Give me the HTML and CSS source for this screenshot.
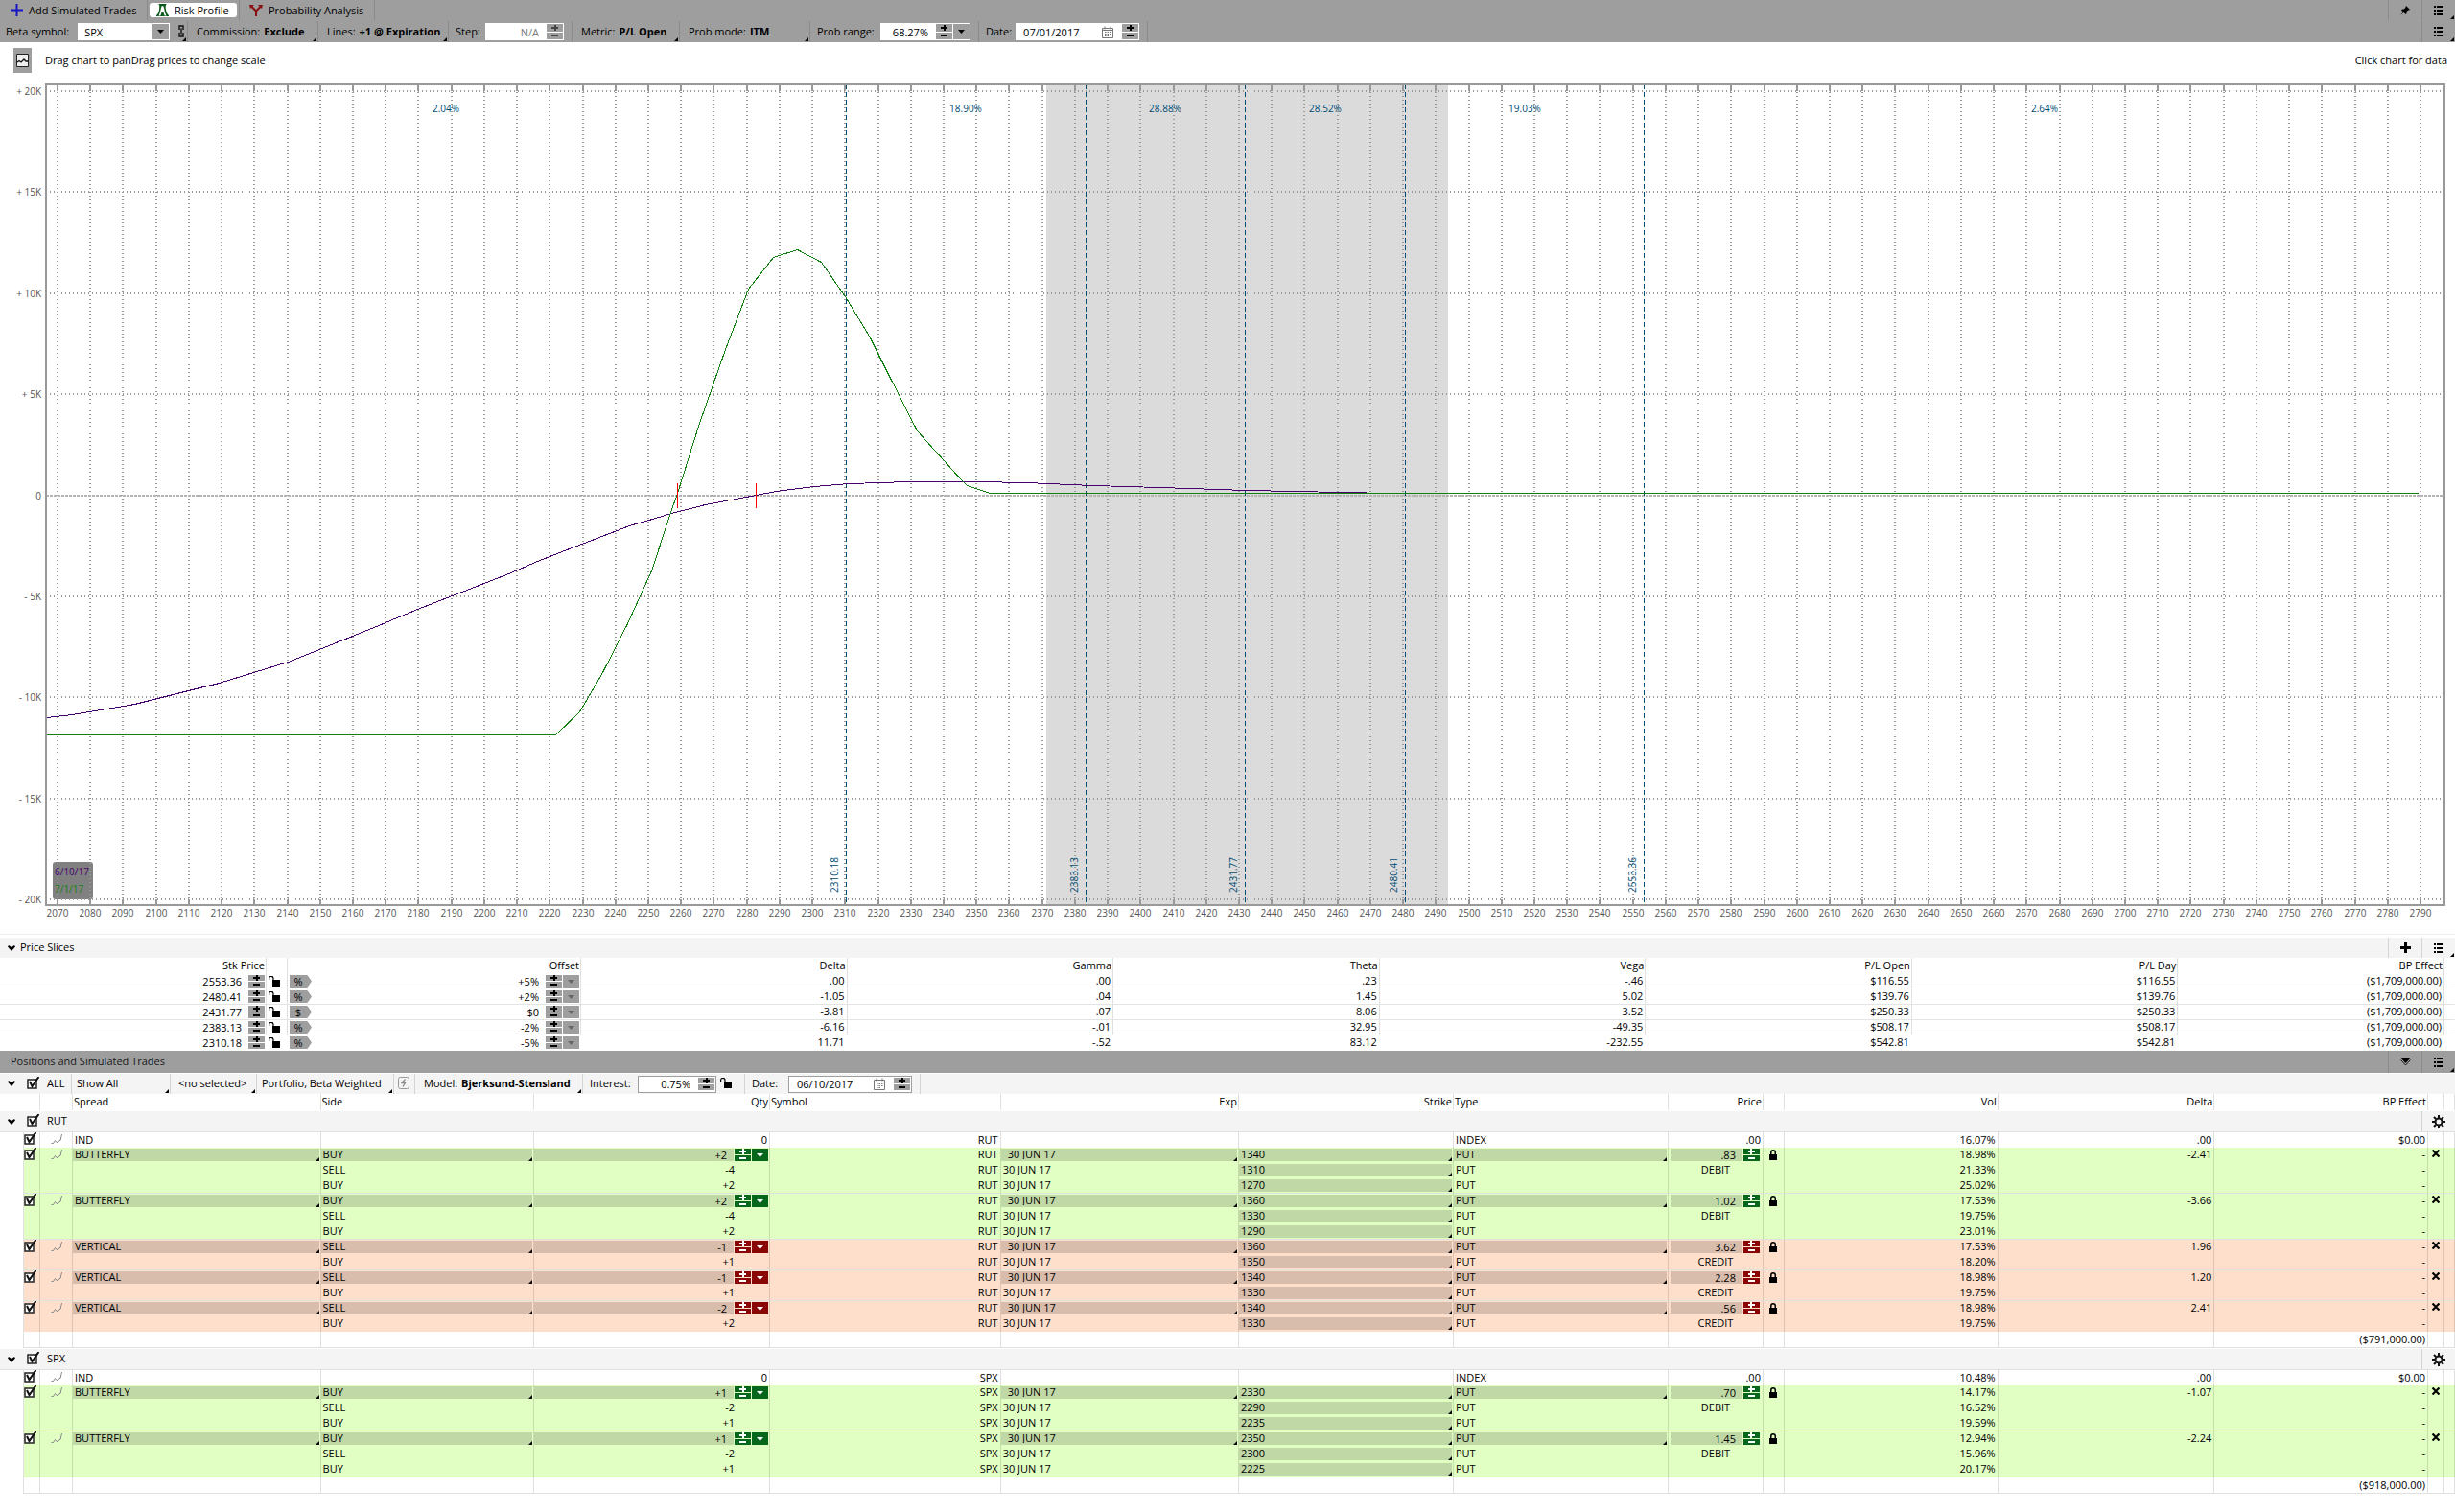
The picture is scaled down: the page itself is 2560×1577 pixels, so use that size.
FILE: index.html
```html
<!DOCTYPE html>
<html lang="en">
<head>
    <meta charset="UTF-8">
    <meta name="viewport" content="width=device-width, initial-scale=1.0">
    <title>Risk Profile</title>
    <link rel="stylesheet" href="styles.css">
</head>
<body>
    <svg class="sprite" aria-hidden="true">
        <symbol id="i-list" viewBox="0 0 10 10"><path d="M0 0h2v2H0zM0 4h2v2H0zM0 8h2v2H0zM3 0h7v2H3zM3 4h7v2H3zM3 8h7v2H3z"/></symbol>
        <symbol id="i-pin" viewBox="0 0 10 10"><path d="M6 0l4 4-1 .6-.8-.2L6.400 6.200 6.600 8 5.600 9 3.500 6.900 0 10 3 6.400 1 4.400 2 3.400l1.800.2L5.600 1.800 5.400 1z"/></symbol>
        <symbol id="i-caret" viewBox="0 0 8 6"><path d="M1 0l3 2 3-2 1 1.500L4 6 0 1.500z"/></symbol>
        <symbol id="i-down" viewBox="0 0 7 4"><path d="M0 0h7L3.500 4z"/></symbol>
        <symbol id="i-check" viewBox="0 0 13 13"><path d="M1 3h9v9H1z" fill="#fff" stroke="#222" stroke-width="1.500"/><path d="M3 5l2.500 5L12.500 0" fill="none" stroke="#111" stroke-width="2"/></symbol>
        <symbol id="i-lock" viewBox="0 0 8 11"><path d="M0 5h1V3a3 3 0 0 1 6 0v2h1v6H0zM2.500 5h3V3a1.500 1.500 0 0 0-3 0z"/></symbol>
        <symbol id="i-unlock" viewBox="0 0 12 11"><path d="M4 4h8v7H4z"/><path d="M.6 4V2.500a2 2 0 0 1 4.400 0V5" fill="none" stroke="#000" stroke-width="1.200"/></symbol>
        <symbol id="i-spark" viewBox="0 0 12 12"><path d="M.5 9.500h2L4.500 6.500 6 8.500h1.500L9 6.500h1L11.500 0" fill="none" stroke="#888"/></symbol>
        <symbol id="i-x" viewBox="0 0 8 8"><path d="M.5.500l7 7M7.500.500l-7 7" fill="none" stroke="#000" stroke-width="2.200"/></symbol>
        <symbol id="i-gear" viewBox="0 0 14 14"><circle cx="7" cy="7" r="3.500" fill="none" stroke="#111" stroke-width="2"/><path d="M7 0v3M7 11v3M0 7h3M11 7h3M2 2l2 2M10 10l2 2M12 2l-2 2M4 10l-2 2" stroke="#111" stroke-width="2"/></symbol>
        <symbol id="i-cal" viewBox="0 0 12 13"><path d="M.5 2.500h11v10H.5zM.5 4.500h11M3 .5v3M9 .5v3" fill="none" stroke="#777"/><path d="M3 6.500h1.500M5.500 6.500H7M8 6.500h1.500M3 8.500h1.500M5.500 8.500H7M8 8.500h1.500M3 10.500h1.500M5.500 10.500H7" stroke="#777"/></symbol>
        <symbol id="i-plus" viewBox="0 0 13 13"><path d="M6.500 0v13M0 6.500h13" stroke="#1515c8" stroke-width="2"/></symbol>
        <symbol id="i-add" viewBox="0 0 11 11"><path d="M5.500 0v11M0 5.500h11" stroke="#000" stroke-width="3"/></symbol>
        <symbol id="i-profile" viewBox="0 0 13 13"><path d="M0 0h13v13H0z" fill="#0a5a1c"/><path d="M0 0h1.500c2 0 2 3 1.500 6-.5 3-1.500 5-3 6zM13 0h-1.500c-2 0-2 3-1.500 6 .5 3 1.500 5 3 6zM6.500 2C4.500 2 5 8 2.500 12.500h1.700c.8-1.500 1-3 1.300-3.500h2c.3.5.5 2 1.300 3.500h1.700C8 8 8.500 2 6.500 2z" fill="#fff"/></symbol>
        <symbol id="i-fork" viewBox="0 0 14 13"><path d="M7 13V7.500L2.500 3M7 7.500L11.500 3" fill="none" stroke="#8a1010" stroke-width="2"/><path d="M0 1h5L1 5zM14 1H9l4 4z" fill="#8a1010"/></symbol>
        <symbol id="i-link" viewBox="0 0 6 13"><path d="M1 5V1h4v4M1 8v4h4V8M3 3.500v6" fill="none" stroke="#111" stroke-width="1.400"/></symbol>
        <symbol id="i-chart" viewBox="0 0 19 26"><path d="M0 0h19v26H0z" fill="#9e9e9e"/><path d="M3.500 6.500h12v13h-12z" fill="#eee" stroke="#222"/><path d="M4 15l2-1.500 2 1.500 3-3 2 2h2" fill="none" stroke="#111" stroke-width="1.300"/></symbol>
        <symbol id="i-bolt" viewBox="0 0 12 13"><rect x=".5" y=".5" width="11" height="12" rx="2" fill="none" stroke="#999"/><path d="M7.500 2.500L4 6.500h3.500L5 10.500" fill="none" stroke="#888" stroke-width="1.300"/></symbol>
        <symbol id="i-collapse" viewBox="0 0 11 9"><path d="M0 0h11L5.500 6z"/><path d="M.5 2.500l5 5.500 5-5.500" fill="none" stroke="#222"/></symbol>
    </svg>

    <nav class="bar tabs">
        <button class="tab tab-add"><svg width="13" height="13"><use href="#i-plus"/></svg>Add Simulated Trades</button>
        <button class="tab tab-active"><span><svg width="13" height="13"><use href="#i-profile"/></svg>Risk Profile</span></button>
        <button class="tab tab-prob"><svg width="14" height="13"><use href="#i-fork"/></svg>Probability Analysis</button>
        <div class="bar-right">
            <button class="icon-btn" aria-label="Pin"><svg width="10" height="10"><use href="#i-pin"/></svg></button>
            <button class="icon-btn corner" aria-label="Menu"><svg width="10" height="10"><use href="#i-list"/></svg></button>
        </div>
    </nav>

    <div class="bar tools">
        <div class="tool w-beta corner">
            <label for="beta">Beta symbol:</label>
            <div class="box box-select">
                <select id="beta"><option>SPX</option></select>
                <span class="drop"><svg width="7" height="4"><use href="#i-down"/></svg></span>
            </div>
            <svg width="6" height="13"><use href="#i-link"/></svg>
        </div>
        <button class="tool w-136 corner">Commission: <b>Exclude</b></button>
        <button class="tool w-136 corner">Lines: <b>+1 @ Expiration</b></button>
        <div class="tool w-step">
            <label for="step">Step:</label>
            <div class="box box-step disabled">
                <input id="step" type="text" value="N/A" disabled>
                <span class="stepper big"><button class="up" aria-label="Increase"></button><button class="down" aria-label="Decrease"></button></span>
            </div>
        </div>
        <button class="tool w-112 corner">Metric: <b>P/L Open</b></button>
        <button class="tool w-136 corner">Prob mode: <b>ITM</b></button>
        <div class="tool w-range">
            <label for="range">Prob range:</label>
            <div class="box box-range">
                <input id="range" type="text" value="68.27%">
                <span class="stepper big"><button class="up" aria-label="Increase"></button><button class="down" aria-label="Decrease"></button></span>
                <button class="drop" aria-label="Choose"><svg width="7" height="4"><use href="#i-down"/></svg></button>
            </div>
        </div>
        <div class="tool w-range">
            <label for="date1">Date:</label>
            <div class="box box-date">
                <input id="date1" type="text" value="07/01/2017">
                <svg width="12" height="13"><use href="#i-cal"/></svg>
                <span class="stepper big"><button class="up" aria-label="Next day"></button><button class="down" aria-label="Previous day"></button></span>
            </div>
        </div>
        <div class="bar-right">
            <button class="icon-btn corner" aria-label="Menu"><svg width="10" height="10"><use href="#i-list"/></svg></button>
        </div>
    </div>

    <section class="chart">
        <div class="chart-head">
            <button class="chart-btn" aria-label="Chart"><svg width="19" height="26"><use href="#i-chart"/></svg></button>
            <p>Drag chart to panDrag prices to change scale</p>
            <p class="hint">Click chart for data</p>
        </div>
        <div class="plot" id="plot"></div>
    </section>

    <section class="slices">
        <div class="panel-head">
            <svg width="8" height="6"><use href="#i-caret"/></svg>
            <h2>Price Slices</h2>
            <div class="bar-right">
                <button class="icon-btn" aria-label="Add slice"><svg width="11" height="11"><use href="#i-add"/></svg></button>
                <button class="icon-btn corner" aria-label="Menu"><svg width="10" height="10"><use href="#i-list"/></svg></button>
            </div>
        </div>
        <table class="slice-table">
            <colgroup>
                <col class="c-price"><col class="c-lock"><col class="c-offset">
                <col><col><col><col><col><col><col>
                <col class="c-end">
            </colgroup>
            <thead>
                <tr><th>Stk Price</th><th></th><th>Offset</th><th>Delta</th><th>Gamma</th><th>Theta</th><th>Vega</th><th>P/L Open</th><th>P/L Day</th><th>BP Effect</th><th></th></tr>
            </thead>
            <tbody id="sliceRows"></tbody>
        </table>
    </section>

    <section class="positions">
        <div class="bar title-bar">
            <h2>Positions and Simulated Trades</h2>
            <div class="bar-right">
                <button class="icon-btn" aria-label="Collapse"><svg width="11" height="9"><use href="#i-collapse"/></svg></button>
                <button class="icon-btn corner" aria-label="Menu"><svg width="10" height="10"><use href="#i-list"/></svg></button>
            </div>
        </div>
        <div class="filters">
            <div class="tool w-all">
                <svg width="8" height="6"><use href="#i-caret"/></svg>
                <label class="check"><input type="checkbox" checked><svg width="13" height="13"><use href="#i-check"/></svg><span>ALL</span></label>
            </div>
            <button class="tool w-show corner">Show All</button>
            <button class="tool w-sel corner">&lt;no selected&gt;</button>
            <button class="tool w-port corner">Portfolio, Beta Weighted</button>
            <button class="tool w-bolt" aria-label="Quick filter"><svg width="12" height="13"><use href="#i-bolt"/></svg></button>
            <button class="tool w-model corner">Model: <b>Bjerksund-Stensland</b></button>
            <div class="tool w-interest">
                <label for="interest">Interest:</label>
                <div class="box box-step">
                    <input id="interest" type="text" value="0.75%">
                    <span class="stepper"><button class="up" aria-label="Increase"></button><button class="down" aria-label="Decrease"></button></span>
                </div>
                <svg width="12" height="11"><use href="#i-unlock"/></svg>
            </div>
            <div class="tool w-date">
                <label for="date2">Date:</label>
                <div class="box box-date">
                    <input id="date2" type="text" value="06/10/2017">
                    <svg width="12" height="13"><use href="#i-cal"/></svg>
                    <span class="stepper"><button class="up" aria-label="Next day"></button><button class="down" aria-label="Previous day"></button></span>
                </div>
            </div>
        </div>
        <table class="trade-table">
            <colgroup>
                <col class="t-tree"><col class="t-check"><col class="t-icon"><col class="t-spread"><col class="t-side"><col class="t-qty">
                <col class="t-symbol"><col class="t-exp"><col class="t-strike"><col class="t-type"><col class="t-price"><col class="t-lock">
                <col class="t-vol"><col><col class="t-bp"><col class="t-x"><col class="t-end">
            </colgroup>
            <thead>
                <tr><th class="bare"></th><th></th><th></th><th class="left">Spread</th><th class="left">Side</th><th>Qty</th><th class="left">Symbol</th><th>Exp</th><th>Strike</th><th class="left">Type</th><th>Price</th><th></th><th>Vol</th><th>Delta</th><th>BP Effect</th><th></th><th></th></tr>
            </thead>
            <tbody id="tradeRows"></tbody>
        </table>
    </section>

    <script src="app.js"></script>
</body>
</html>
```

FILE: styles.css
```css
* {
    box-sizing: border-box;
}

body {
    margin: 0;
    min-height: 100vh;
    display: flex;
    flex-direction: column;
    background: #fff;
    color: #000;
    font-family: "Open Sans", "Noto Sans", sans-serif;
    font-size: 11px;
    line-height: 15px;
}

h2, p {
    margin: 0;
    font-size: 11px;
    font-weight: normal;
}

button, input, select {
    margin: 0;
    padding: 0;
    border: 0;
    border-radius: 0;
    background: none;
    color: inherit;
    font: inherit;
}

select {
    appearance: none;
}

svg {
    display: block;
    flex: none;
}

.sprite {
    position: absolute;
    width: 0;
    height: 0;
}

/* Bars */
.bar {
    display: flex;
    background: #9e9e9e;
}

.bar-right {
    display: flex;
    align-self: stretch;
    margin-left: auto;
}

.icon-btn {
    width: 35px;
    display: flex;
    align-items: center;
    justify-content: center;
    border-left: 1px solid #8a8a8a;
}

.corner {
    position: relative;
}

.corner::after {
    content: "";
    position: absolute;
    right: 1px;
    bottom: 1px;
    border-left: 4px solid transparent;
    border-bottom: 4px solid #000;
}

.tabs {
    height: 22px;
    padding-bottom: 1px;
}

.tab {
    display: flex;
    align-items: center;
    gap: 6px;
    padding-bottom: 1px;
    border-right: 1px solid #8a8a8a;
    white-space: nowrap;
}

.tab-add {
    width: 154px;
    padding-left: 11px;
}

.tab-active {
    width: 96px;
    padding: 0 2px 1px;
}

.tab-active span {
    flex: 1;
    height: 15px;
    display: flex;
    align-items: center;
    gap: 6px;
    padding-left: 7px;
    border-radius: 3px;
    background: #fff;
}

.tab-prob {
    width: 141px;
    padding-left: 10px;
}

.tools {
    height: 22px;
}

.tool {
    display: flex;
    align-items: center;
    gap: 4px;
    padding-left: 9px;
    padding-bottom: 2px;
    border-right: 1px solid #8a8a8a;
    white-space: nowrap;
}

.w-beta { width: 196px; padding-left: 6px; gap: 9px; }
.w-112 { width: 112px; }
.w-136 { width: 136px; }
.w-step { width: 129px; padding-left: 7px; padding-right: 8px; }
.w-range { width: 176px; padding-left: 7px; padding-right: 8px; }
.w-all { width: 75px; padding-left: 8px; gap: 12px; }
.w-show { width: 103px; padding-left: 5px; }
.w-sel { width: 90px; padding-left: 8px; }
.w-port { width: 143px; padding-left: 5px; }
.w-bolt { width: 22px; padding-left: 4px; }
.w-model { width: 175px; }
.w-interest { width: 169px; padding-left: 7px; padding-right: 13px; }
.w-date { width: 183px; padding-left: 7px; padding-right: 8px; }

.box {
    height: 18px;
    display: flex;
    align-items: center;
    gap: 1px;
    margin-top: 2px;
    margin-left: auto;
    padding: 1px;
    background: #fff;
}

.box input {
    flex: 1;
    min-width: 0;
    padding-right: 7px;
    text-align: right;
}

.box-select { width: 96px; margin-left: 0; }
.box-select select { flex: 1; padding-left: 6px; }
.box-step { width: 82px; }
.box-range { width: 94px; }
.box-date { width: 129px; }
.box-date input { padding-left: 7px; text-align: left; }
.box-date svg { margin-right: 8px; }

.drop {
    width: 17px;
    align-self: stretch;
    display: flex;
    align-items: center;
    justify-content: center;
    background: #9e9e9e;
}

.disabled input {
    color: #777;
}

.disabled .stepper {
    --mark: #444;
}

/* Plus and minus buttons */
.stepper {
    --face: #9e9e9e;
    --mark: #000;
    width: 17px;
    height: 13px;
    flex: none;
    display: flex;
    flex-direction: column;
    gap: 1px;
}

.stepper.big {
    height: 16px;
}

.stepper button {
    flex: 1;
    background: linear-gradient(var(--mark), var(--mark)) center / 7px 2px no-repeat var(--face);
}

.stepper .up {
    background: linear-gradient(var(--mark), var(--mark)) center / 7px 2px no-repeat, linear-gradient(var(--mark), var(--mark)) center / 2px 6px no-repeat var(--face);
}

/* Chart */
.chart {
    flex: 1;
    display: flex;
    flex-direction: column;
    margin-bottom: 3px;
    padding-bottom: 2px;
    border-bottom: 1px solid #f0f0f0;
}

.chart-head {
    height: 43px;
    display: flex;
    align-items: center;
    gap: 14px;
    padding: 0 8px 6px 14px;
}

.hint {
    margin-left: auto;
}

.plot {
    flex: 1;
    min-height: 400px;
    position: relative;
}

.plot svg {
    position: absolute;
    inset: 0;
}

.plot text {
    font-size: 10px;
    fill: #555;
}

.frame {
    fill: none;
    stroke: #999;
    stroke-width: 2;
}

.frame, .grid, .zero, .tick, .slice, .even, .curve {
    shape-rendering: crispEdges;
}

.range { fill: #dbdbdb; }
.grid { stroke: #999; stroke-width: 2; stroke-dasharray: 1 3; }
.zero { stroke: #b4b4b4; stroke-width: 2; stroke-dasharray: 3 1; }
.tick { stroke: #999; stroke-width: 2; }
.slice { stroke: #004b73; stroke-dasharray: 5 3; }
.even { stroke: #f00; }
.legend { fill: #808080; }

.curve {
    fill: none;
    stroke-width: 1;
}

.now { stroke: #46006e; }
.exp { stroke: #118011; }

.plot .prob, .plot .slice-label {
    fill: #004b73;
}

.plot .legend-now { fill: #46006e; }
.plot .legend-exp { fill: #118011; }

/* Tables */
table {
    width: 100%;
    table-layout: fixed;
    border-collapse: separate;
    border-spacing: 0;
}

th, td {
    height: 16px;
    padding: 0 2px;
    border-right: 1px solid rgba(0, 0, 0, 0.12);
    font-weight: normal;
    line-height: 13px;
    text-align: right;
    vertical-align: top;
    white-space: nowrap;
}

th {
    height: 17px;
    padding: 0 1px;
    line-height: 15px;
}

.left {
    text-align: left;
}

.center {
    text-align: center;
}

.panel-head {
    height: 21px;
    display: flex;
    align-items: center;
    gap: 5px;
    padding-left: 8px;
    background: #f4f4f4;
}

.panel-head h2, .title-bar h2 {
    padding-bottom: 2px;
}

.panel-head .icon-btn {
    border-color: #d4d4d4;
}

.c-price { width: 278px; }
.c-lock { width: 22px; }
.c-offset { width: 306px; }
.c-end { width: 11px; }

.slice-table td {
    border-bottom: 1px solid #e4e4e4;
}

.slice-table tr:last-child td, .slice-table td:last-child, .slice-table th:last-child {
    border-right-color: transparent;
}

.slice-table tr:last-child td {
    border-bottom: 0;
}

.cell {
    height: 13px;
    display: flex;
    align-items: center;
    gap: 1px;
    margin-top: 1px;
}

.cell input {
    flex: 1;
    min-width: 0;
    height: 13px;
    padding-right: 7px;
    text-align: right;
}

.slice-table .cell {
    margin-right: -1px;
}

.slice-table .cell input {
    padding-right: 6px;
}

.cell .drop {
    color: #666;
    fill: #666;
}

.unit {
    width: 23px;
    height: 13px;
    padding-right: 5px;
    background: #9e9e9e;
    clip-path: polygon(0 0, 80% 0, 100% 50%, 80% 100%, 0 100%);
    line-height: 13px;
}

.mark {
    display: block;
    margin: 2px auto 0;
}

.slice-table .mark {
    margin-left: 0;
}

/* Positions */
.positions {
    padding-bottom: 19px;
}

.title-bar {
    height: 23px;
    align-items: center;
    padding-left: 11px;
    color: #1a1a1a;
}

.filters {
    height: 21px;
    display: flex;
    margin-top: 1px;
    background: #f4f4f4;
}

.filters .tool {
    border-color: #d4d4d4;
}

.filters .box {
    border: 1px solid #9e9e9e;
}

.check {
    display: flex;
    align-items: center;
    gap: 8px;
}

.check input {
    position: absolute;
    opacity: 0;
}

.t-tree { width: 25px; }
.t-check { width: 17px; }
.t-icon { width: 34px; }
.t-spread { width: 10.1%; }
.t-side { width: 8.7%; }
.t-qty { width: 9.6%; }
.t-symbol { width: 9.4%; }
.t-exp { width: 9.7%; }
.t-strike, .t-type { width: 8.75%; }
.t-price { width: 99px; }
.t-lock { width: 22px; }
.t-vol, .t-bp { width: 8.7%; }
.t-x { width: 17px; }
.t-end { width: 11px; }

.trade-table .bare {
    border-right: 0;
}

.trade-table .tight {
    padding: 0;
}

.trade-table .group td {
    height: 23px;
    padding: 0;
    border-top: 1px solid #fff;
    border-right: 0;
    border-bottom: 1px solid #e0e0e0;
    text-align: left;
}

.group-head {
    height: 21px;
    display: flex;
    align-items: center;
    gap: 12px;
    padding-left: 8px;
    background: #f4f4f4;
}

.group-head .check {
    padding-bottom: 2px;
    line-height: 15px;
}

.group-head .icon-btn {
    border-color: #d4d4d4;
}

.index td { line-height: 15px; }
.buy td:not(:first-child) { background: #e1fec3; }
.sell td:not(:first-child) { background: #fedfcb; }
.last td:not(:first-child) { border-bottom: 1px solid #dfe3df; }
.total td { height: 17px; line-height: 15px; }
.total td:not(:first-child) { border-bottom: 1px solid #e0e0e0; }

.buy .stepper { --face: #06661c; --mark: #fff; }
.sell .stepper { --face: #8a0505; --mark: #fff; }
.buy .cell .drop { background: #06661c; fill: #fff; }
.sell .cell .drop { background: #8a0505; fill: #fff; }

.pick {
    position: relative;
    display: flex;
    height: 13px;
    margin: 1px 1px 0 0;
    background: rgba(0, 0, 0, 0.15);
}

.pick select {
    flex: 1;
    height: 13px;
    padding-left: 2px;
    padding-bottom: 2px;
    line-height: 11px;
}

.pick.corner::after {
    right: 0;
    bottom: 0;
}

.pick.indent select {
    padding-left: 7px;
}

.cell.shade {
    margin-right: 1px;
}

.shade input {
    background: rgba(0, 0, 0, 0.15);
}

.trade-table .leg-qty {
    padding-right: 36px;
}
```

FILE: app.js
```js
const icon = (name, w, h, cls = '') =>
    `<svg class="${cls}" width="${w}" height="${h}"><use href="#i-${name}"/></svg>`;

const stepper = `<span class="stepper"><button class="up" aria-label="Increase"></button><button class="down" aria-label="Decrease"></button></span>`;
const drop = `<button class="drop" aria-label="Choose">${icon('down', 7, 4)}</button>`;

const check = (label, text = '') =>
    `<label class="check"><input type="checkbox" aria-label="${label}" checked>${icon('check', 13, 13)}${text && `<span>${text}</span>`}</label>`;

const pick = (label, value, cls = '') =>
    `<div class="pick corner ${cls}"><select aria-label="${label}"><option>${value}</option></select></div>`;

// ---- Price slices ----
const slices = [
    ['2553.36', '%', '+5%', '.00', '.00', '.23', '-.46', '$116.55'],
    ['2480.41', '%', '+2%', '-1.05', '.04', '1.45', '5.02', '$139.76'],
    ['2431.77', '$', '$0', '-3.81', '.07', '8.06', '3.52', '$250.33'],
    ['2383.13', '%', '-2%', '-6.16', '-.01', '32.95', '-49.35', '$508.17'],
    ['2310.18', '%', '-5%', '11.71', '-.52', '83.12', '-232.55', '$542.81']
];

document.getElementById('sliceRows').innerHTML = slices.map(([price, unit, offset, ...rest]) => `
    <tr>
        <td><div class="cell"><input type="text" aria-label="Stk Price" value="${price}">${stepper}</div></td>
        <td>${icon('unlock', 12, 11, 'mark')}</td>
        <td><div class="cell"><button class="unit">${unit}</button><input type="text" aria-label="Offset" value="${offset}">${stepper}${drop}</div></td>
        ${rest.map(v => `<td>${v}</td>`).join('')}
        <td>${rest[4]}</td>
        <td>($1,709,000.00)</td>
        <td></td>
    </tr>`).join('');

// ---- Positions ----
// legs: [side, qty, strike, vol]
const groups = [
    {
        symbol: 'RUT', vol: '16.07%', total: '($791,000.00)',
        trades: [
            { name: 'BUTTERFLY', price: '.83', delta: '-2.41', legs: [['BUY', '+2', 1340, '18.98%'], ['SELL', '-4', 1310, '21.33%'], ['BUY', '+2', 1270, '25.02%']] },
            { name: 'BUTTERFLY', price: '1.02', delta: '-3.66', legs: [['BUY', '+2', 1360, '17.53%'], ['SELL', '-4', 1330, '19.75%'], ['BUY', '+2', 1290, '23.01%']] },
            { name: 'VERTICAL', price: '3.62', delta: '1.96', legs: [['SELL', '-1', 1360, '17.53%'], ['BUY', '+1', 1350, '18.20%']] },
            { name: 'VERTICAL', price: '2.28', delta: '1.20', legs: [['SELL', '-1', 1340, '18.98%'], ['BUY', '+1', 1330, '19.75%']] },
            { name: 'VERTICAL', price: '.56', delta: '2.41', legs: [['SELL', '-2', 1340, '18.98%'], ['BUY', '+2', 1330, '19.75%']] }
        ]
    },
    {
        symbol: 'SPX', vol: '10.48%', total: '($918,000.00)',
        trades: [
            { name: 'BUTTERFLY', price: '.70', delta: '-1.07', legs: [['BUY', '+1', 2330, '14.17%'], ['SELL', '-2', 2290, '16.52%'], ['BUY', '+1', 2235, '19.59%']] },
            { name: 'BUTTERFLY', price: '1.45', delta: '-2.24', legs: [['BUY', '+1', 2350, '12.94%'], ['SELL', '-2', 2300, '15.96%'], ['BUY', '+1', 2225, '20.17%']] }
        ]
    }
];

function legRow(symbol, trade, leg, i, lastTrade) {
    const [side, qty, strike, vol] = leg;
    const buy = trade.legs[0][0] === 'BUY';
    const first = i === 0;
    const last = i === trade.legs.length - 1 && !lastTrade;
    return `
    <tr class="${buy ? 'buy' : 'sell'} ${last ? 'last' : ''}">
        <td></td>
        <td class="tight">${first ? check(trade.name) : ''}</td>
        <td>${first ? icon('spark', 12, 12, 'mark') : ''}</td>
        <td class="left tight">${first ? pick('Spread', trade.name) : ''}</td>
        <td class="left ${first ? 'tight' : ''}">${first ? pick('Side', side) : side}</td>
        ${first
            ? `<td class="tight"><div class="cell shade"><input type="text" aria-label="Qty" value="${qty}">${stepper}${drop}</div></td>`
            : `<td class="leg-qty">${qty}</td>`}
        <td>${symbol}</td>
        <td class="left ${first ? 'tight' : ''}">${first ? pick('Exp', '30 JUN 17', 'indent') : '30 JUN 17'}</td>
        <td class="left tight">${pick('Strike', strike)}</td>
        <td class="left ${first ? 'tight' : ''}">${first ? pick('Type', 'PUT') : 'PUT'}</td>
        ${first
            ? `<td><div class="cell shade"><input type="text" aria-label="Price" value="${trade.price}">${stepper}</div></td>`
            : `<td class="center">${i === 1 ? (buy ? 'DEBIT' : 'CREDIT') : ''}</td>`}
        <td>${first ? icon('lock', 8, 11, 'mark') : ''}</td>
        <td>${vol}</td>
        <td>${first ? trade.delta : ''}</td>
        <td>-</td>
        <td>${first ? icon('x', 8, 8, 'mark') : ''}</td>
        <td></td>
    </tr>`;
}

document.getElementById('tradeRows').innerHTML = groups.map(g => `
    <tr class="group"><td colspan="17"><div class="group-head">
        ${icon('caret', 8, 6)}${check(g.symbol, g.symbol)}
        <div class="bar-right"><button class="icon-btn" aria-label="Settings">${icon('gear', 14, 14)}</button></div>
    </div></td></tr>
    <tr class="index">
        <td></td><td class="tight">${check('IND')}</td><td>${icon('spark', 12, 12, 'mark')}</td><td class="left">IND</td><td></td><td>0</td>
        <td>${g.symbol}</td><td></td><td></td><td class="left">INDEX</td><td>.00</td><td></td>
        <td>${g.vol}</td><td>.00</td><td>$0.00</td><td></td><td></td>
    </tr>
    ${g.trades.map((t, n) => t.legs.map((leg, i) => legRow(g.symbol, t, leg, i, n === g.trades.length - 1)).join('')).join('')}
    <tr class="total">${'<td></td>'.repeat(14)}<td>${g.total}</td><td></td><td></td></tr>
`).join('');

// ---- Chart ----
const MIN = 2066.5;
const MAX = 2797.3;

const expiration = [
    [2066.5, -11836], [2221.8, -11836], [2229.1, -10683], [2236.1, -8776], [2243.7, -6333], [2251, -3710], [2256.3, -973],
    [2258.9, 120], [2265.6, 3582], [2273.5, 7235], [2280.5, 10242], [2288.1, 11789], [2295.4, 12169], [2302.7, 11552],
    [2310, 9844], [2317.3, 7899], [2323.1, 6001], [2331.9, 3202], [2345.3, 783], [2347.1, 498], [2354.1, 142], [2789.2, 142]
];

const today = [
    [2066.5, -10982], [2074.4, -10840], [2093.4, -10330], [2119, -9300], [2140.1, -8230], [2150.3, -7570], [2166.9, -6480],
    [2179.5, -5600], [2195.5, -4640], [2207.2, -3870], [2216, -3270], [2228.2, -2470], [2244.3, -1490], [2256.9, -880],
    [2267.1, -450], [2282.6, 20], [2289, 210], [2300.7, 450], [2310.9, 570], [2321.1, 640], [2328.4, 710], [2350.3, 710],
    [2365.2, 620], [2385.3, 500], [2405.8, 380], [2432, 240], [2461.2, 165], [2475.8, 142]
];

const probs = ['2.04%', '18.90%', '28.88%', '28.52%', '19.03%', '2.64%'];

function drawChart() {
    const plot = document.getElementById('plot');
    const width = plot.clientWidth;
    const height = plot.clientHeight;
    const left = 48, top = 1, right = width - 11, bottom = height - 28;
    const x = p => Math.round(left + (p - MIN) / (MAX - MIN) * (right - left));
    const y = v => Math.round(top + 7 + (20000 - v) / 40000 * (bottom - top - 13));
    const line = (cls, x1, y1, x2, y2) => `<line class="${cls}" x1="${x1}" y1="${y1}" x2="${x2}" y2="${y2}"/>`;
    const path = (cls, pts) => `<polyline class="curve ${cls}" points="${pts.map(([p, v]) => `${x(p) + 0.5},${y(v) + 0.5}`).join(' ')}"/>`;

    const strikes = slices.map(s => Number(s[0])).reverse();
    let out = `<rect class="range" x="${x(2371.3)}" y="${top}" width="${x(2493.6) - x(2371.3)}" height="${bottom - top}"/>`;
    out += `<rect class="legend" x="${left + 7}" y="${bottom - 45}" width="42" height="39" rx="3"/>`;

    for (let p = 2070; p <= 2790; p += 10) {
        out += line('grid', x(p), top, x(p), bottom);
        out += line('tick', x(p), top, x(p), top + 7) + line('tick', x(p), bottom - 6, x(p), bottom);
        out += `<text x="${x(p)}" y="${bottom + 12}" text-anchor="middle">${p}</text>`;
    }

    for (let v = -20000; v <= 20000; v += 5000) {
        const label = v === 0 ? '0' : `${v > 0 ? '+' : '-'} ${Math.abs(v) / 1000}K`;
        out += line(v === 0 ? 'zero' : 'grid', left, y(v), right, y(v));
        out += `<text x="43" y="${y(v) + 4}" text-anchor="end">${label}</text>`;
    }

    strikes.forEach(p => {
        out += line('slice', x(p) + 0.5, top, x(p) + 0.5, bottom);
        out += `<text class="slice-label" transform="translate(${x(p) - 8} ${bottom - 13}) rotate(-90)">${p.toFixed(2)}</text>`;
    });

    const edges = [MIN, ...strikes, MAX];
    probs.forEach((t, i) => {
        const mid = Math.round((x(edges[i]) + x(edges[i + 1])) / 2);
        out += `<text class="prob" x="${mid}" y="${top + 29}" text-anchor="middle">${t}</text>`;
    });

    out += path('now', today) + path('exp', expiration);
    [2258.8, 2282.7].forEach(p => {
        out += line('even', x(p) + 0.5, y(0) - 13, x(p) + 0.5, y(0) + 13);
    });

    out += `<text class="legend-now" x="${left + 9}" y="${bottom - 31}">6/10/17</text>`;
    out += `<text class="legend-exp" x="${left + 9}" y="${bottom - 13}">7/1/17</text>`;
    out += `<rect class="frame" x="${left}" y="${top}" width="${right - left}" height="${bottom - top}"/>`;

    plot.innerHTML = `<svg width="${width}" height="${height}" role="img" aria-label="Profit and loss by price">${out}</svg>`;
}

drawChart();
window.addEventListener('resize', drawChart);
```
